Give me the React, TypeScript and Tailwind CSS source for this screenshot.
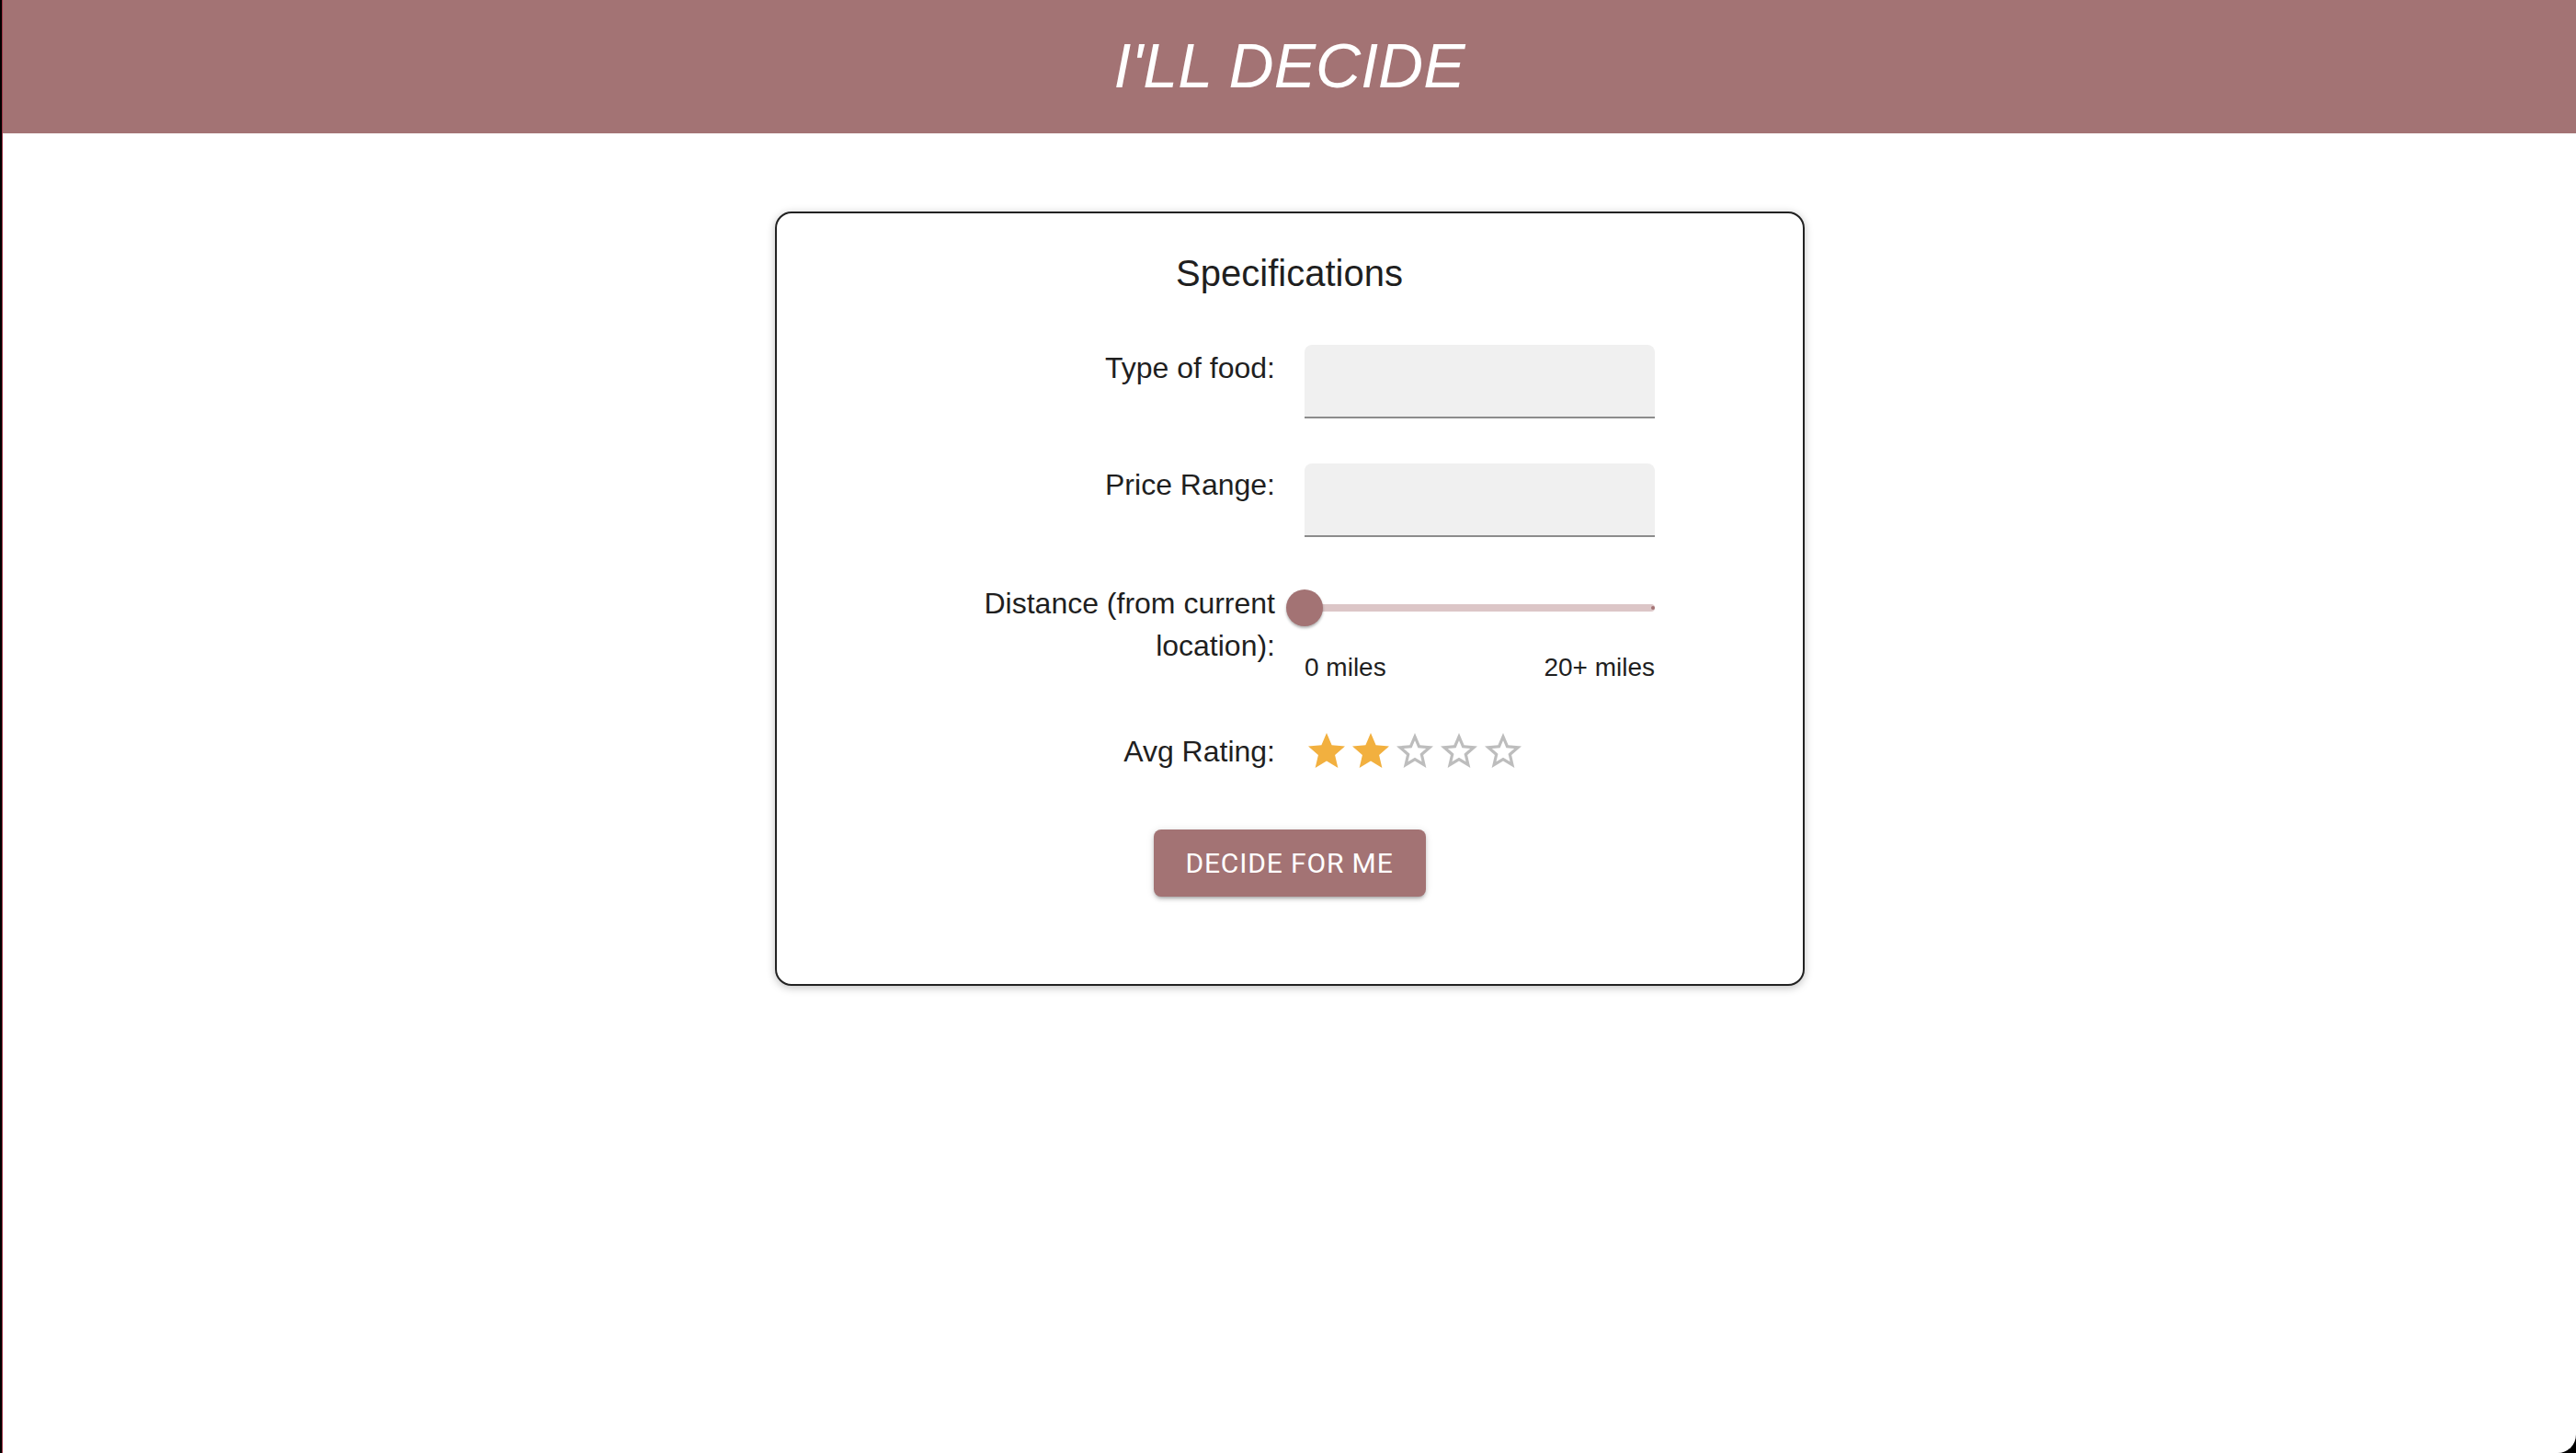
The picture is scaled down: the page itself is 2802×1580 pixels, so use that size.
import React from "react";

const STAR_FILLED =
  "M12 17.27 18.18 21l-1.64-7.03L22 9.24l-7.19-.61L12 2 9.19 8.63 2 9.24l5.46 4.73L5.82 21z";
const STAR_BORDER =
  "M22 9.24l-7.19-.62L12 2 9.19 8.63 2 9.24l5.46 4.73L5.82 21 12 17.27 18.18 21l-1.63-7.03L22 9.24zM12 15.4l-3.76 2.27 1-4.28-3.32-2.88 4.38-.38L12 6.1l1.71 4.04 4.38.38-3.32 2.88 1 4.28L12 15.4z";

function Star({ filled }: { filled: boolean }) {
  return (
    <svg viewBox="0 0 24 24" className="w-[48px] h-[48px] shrink-0">
      <path d={filled ? STAR_FILLED : STAR_BORDER} fill={filled ? "#f2b03f" : "#bdbdbd"} />
    </svg>
  );
}

export default function App() {
  return (
    <div className="bg-black min-h-[1580px] pl-[2px] font-['Liberation_Sans',Arial,sans-serif]">
      <div className="min-h-[1580px] bg-white border-l border-[#a0384a] rounded-br-[20px] flex flex-col">
        <header className="h-[145px] bg-[#a37374] flex items-center justify-center pb-[4px]">
          <h1 className="text-[68px] leading-none italic font-normal text-white">I'LL DECIDE</h1>
        </header>

        <div className="flex justify-center pt-[85px]">
          <div className="w-[1120px] h-[842px] border-2 border-[#222222] rounded-[18px] shadow-[0_2px_10px_rgba(0,0,0,0.25)] bg-white flex flex-col items-center pt-[41px] text-[#1f1f1f]">
            <h2 className="text-[40px] leading-[48px] font-normal">Specifications</h2>

            <div className="grid grid-cols-[382px_381px] gap-x-[32px] mt-[54px]">
              <div className="text-[32px] leading-[50px] text-right">Type of food:</div>
              <div className="h-[80px] bg-[#f0f0f0] rounded-t-[8px] border-b-2 border-[#8c8c8c]" />
            </div>

            <div className="grid grid-cols-[382px_381px] gap-x-[32px] mt-[49px]">
              <div className="text-[32px] leading-[46px] text-right">Price Range:</div>
              <div className="h-[80px] bg-[#f0f0f0] rounded-t-[8px] border-b-2 border-[#8c8c8c]" />
            </div>

            <div className="grid grid-cols-[382px_381px] gap-x-[32px] mt-[49px]">
              <div className="text-[32px] leading-[46px] text-right">
                Distance (from current
                <br />
                location):
              </div>
              <div className="flex flex-col">
                <div className="relative h-[56px] flex items-center">
                  <div className="w-full h-[8px] rounded-full bg-[#dcc6c7]" />
                  <div className="absolute right-0 top-[26px] w-[4px] h-[4px] rounded-full bg-[#a37374]" />
                  <div className="absolute left-[-20px] top-[8px] w-[40px] h-[40px] rounded-full bg-[#a37374] shadow-[0_2px_3px_rgba(0,0,0,0.3)]" />
                </div>
                <div className="flex justify-between mt-[20px] text-[28px] leading-[34px]">
                  <span>0 miles</span>
                  <span>20+ miles</span>
                </div>
              </div>
            </div>

            <div className="grid grid-cols-[382px_381px] gap-x-[32px] mt-[50px] items-center">
              <div className="text-[32px] leading-[48px] text-right">Avg Rating:</div>
              <div className="flex">
                <Star filled />
                <Star filled />
                <Star filled={false} />
                <Star filled={false} />
                <Star filled={false} />
              </div>
            </div>

            <button className="mt-[61px] w-[296px] h-[73px] rounded-[8px] bg-[#a37374] text-white text-[30px] tracking-[0.857px] uppercase font-['Roboto',Arial,sans-serif] shadow-[0_3px_3px_-2px_rgba(0,0,0,0.2),0_3px_4px_0_rgba(0,0,0,0.14),0_1px_8px_0_rgba(0,0,0,0.12)]">
              Decide for me
            </button>
          </div>
        </div>
      </div>
    </div>
  );
}
